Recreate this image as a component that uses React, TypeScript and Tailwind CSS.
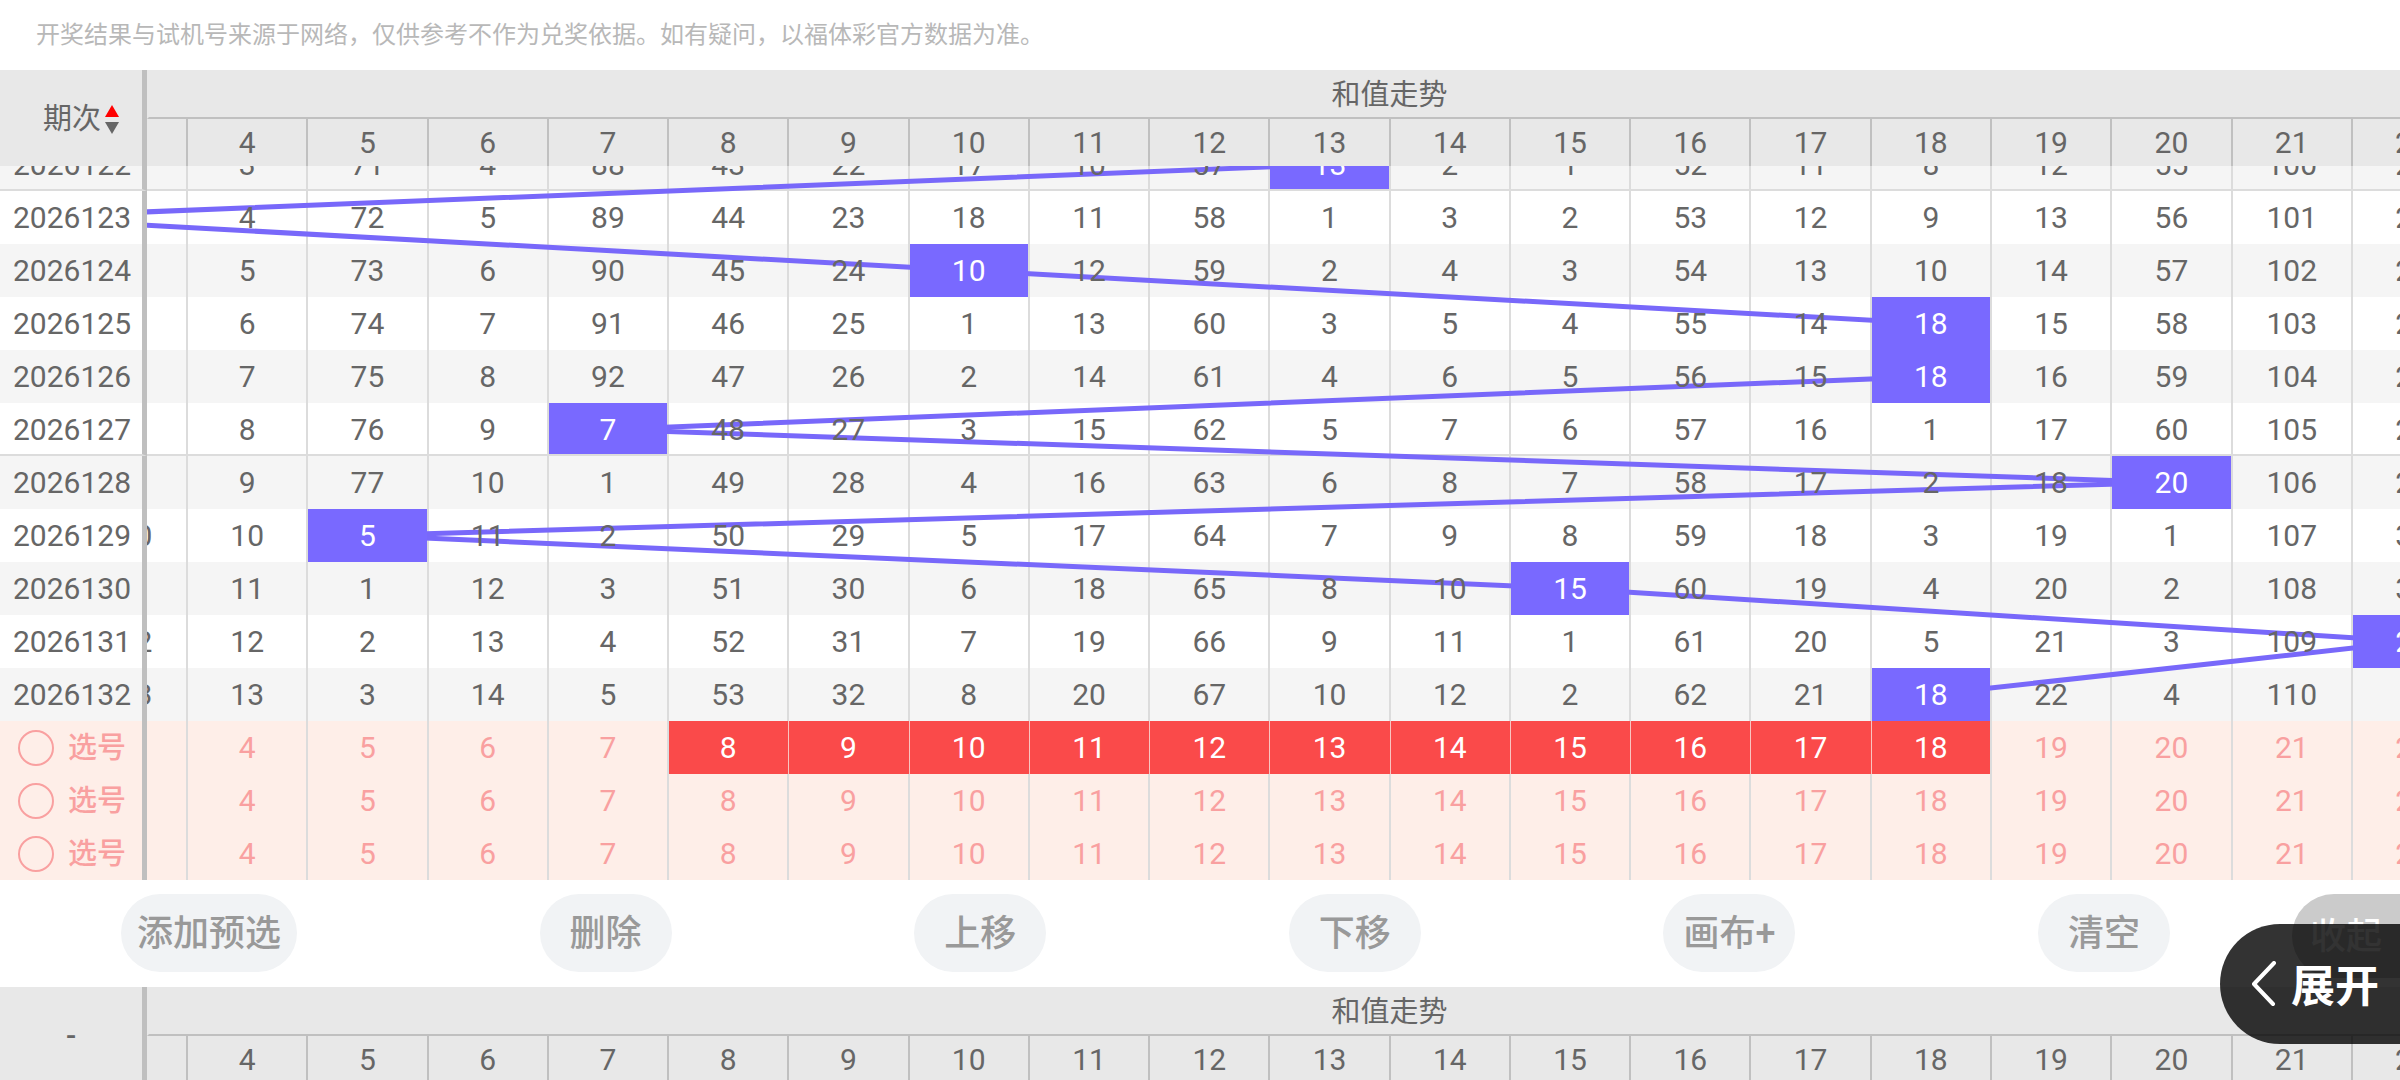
import type { ReactNode } from "react";

const columns = [4, 5, 6, 7, 8, 9, 10, 11, 12, 13, 14, 15, 16, 17, 18, 19, 20, 21];
const ROW_HEIGHT = 53;
const COLUMN_WIDTH = 2165 / 18;

type Draw = { issue: string; before?: number; values: number[]; after?: number; hit: number; groupEnd?: boolean };

const draws: Draw[] = [
  { issue: "2026122", values: [3, 71, 4, 88, 43, 22, 17, 10, 57, 13, 2, 1, 52, 11, 8, 12, 55, 100], after: 23, hit: 13, groupEnd: true },
  { issue: "2026123", values: [4, 72, 5, 89, 44, 23, 18, 11, 58, 1, 3, 2, 53, 12, 9, 13, 56, 101], after: 24, hit: 2 },
  { issue: "2026124", values: [5, 73, 6, 90, 45, 24, 10, 12, 59, 2, 4, 3, 54, 13, 10, 14, 57, 102], after: 25, hit: 10 },
  { issue: "2026125", values: [6, 74, 7, 91, 46, 25, 1, 13, 60, 3, 5, 4, 55, 14, 18, 15, 58, 103], after: 26, hit: 18 },
  { issue: "2026126", values: [7, 75, 8, 92, 47, 26, 2, 14, 61, 4, 6, 5, 56, 15, 18, 16, 59, 104], after: 27, hit: 18 },
  { issue: "2026127", values: [8, 76, 9, 7, 48, 27, 3, 15, 62, 5, 7, 6, 57, 16, 1, 17, 60, 105], after: 28, hit: 7, groupEnd: true },
  { issue: "2026128", values: [9, 77, 10, 1, 49, 28, 4, 16, 63, 6, 8, 7, 58, 17, 2, 18, 20, 106], after: 29, hit: 20 },
  { issue: "2026129", before: 100, values: [10, 5, 11, 2, 50, 29, 5, 17, 64, 7, 9, 8, 59, 18, 3, 19, 1, 107], after: 30, hit: 5 },
  { issue: "2026130", values: [11, 1, 12, 3, 51, 30, 6, 18, 65, 8, 10, 15, 60, 19, 4, 20, 2, 108], after: 31, hit: 15 },
  { issue: "2026131", before: 102, values: [12, 2, 13, 4, 52, 31, 7, 19, 66, 9, 11, 1, 61, 20, 5, 21, 3, 109], after: 22, hit: 22 },
  { issue: "2026132", before: 103, values: [13, 3, 14, 5, 53, 32, 8, 20, 67, 10, 12, 2, 62, 21, 18, 22, 4, 110], hit: 18 },
];

const picks = [
  { id: "pick-1", from: 8, to: 18 },
  { id: "pick-2", from: 0, to: 0 },
  { id: "pick-3", from: 0, to: 0 },
];

const actions = ["添加预选", "删除", "上移", "下移", "画布+", "清空"];

function Columns() {
  return (
    <colgroup>
      <col className="w-[147px]" />
      <col className="w-[41px]" />
      {columns.map((n) => (
        <col key={n} />
      ))}
      <col className="w-[47px]" />
    </colgroup>
  );
}

function SortArrows() {
  return (
    <svg className="h-[34px] w-[14px]" viewBox="0 0 14 34" aria-hidden="true">
      <path d="M7 2 14 14H0Z" fill="#ff0000" />
      <path d="M0 19H14L7 31Z" fill="#666666" />
    </svg>
  );
}

function Header({ sortable }: { sortable?: boolean }) {
  return (
    <table className="w-full table-fixed border-separate border-spacing-0 bg-[#e8e8e8]">
      <Columns />
      <thead>
        <tr className="h-[49px]">
          <th rowSpan={2} className="border-r-[5px] border-[#bfbfbf] p-0 font-normal">
            {sortable ? (
              <button type="button" className="flex w-full items-center justify-center gap-1 pt-1 pl-6 pr-1">
                <span className="text-[29px]">期次</span>
                <SortArrows />
              </button>
            ) : (
              <span className="text-[30px] font-medium">-</span>
            )}
          </th>
          <th
            colSpan={20}
            className="border-b-2 border-l-2 border-b-[#c0c0c0] border-l-[#e8e8e8] p-0 pt-1 pl-[230px] text-[29px] leading-none font-normal"
          >
            和值走势
          </th>
        </tr>
        <tr className="h-[47px]">
          <th className="border-r-2 border-[#c0c0c0] p-0" />
          {columns.map((n) => (
            <th key={n} className="border-r-2 border-[#c0c0c0] p-0 text-[30px] leading-none font-normal">
              {n}
            </th>
          ))}
          <th className="p-0 text-[30px] leading-none font-normal">
            <EdgeValue side="right">22</EdgeValue>
          </th>
        </tr>
      </thead>
    </table>
  );
}

function EdgeValue({ side, children }: { side: "left" | "right"; children: ReactNode }) {
  return (
    <div className={side === "left" ? "flex justify-end overflow-hidden" : "flex justify-start overflow-hidden"}>
      <span className="relative z-20 w-[118px] shrink-0 text-center">{children}</span>
    </div>
  );
}

function TrendLines() {
  const points = draws.map((d, i) => ({
    x: 40 + (d.hit - 4 + 0.5) * COLUMN_WIDTH,
    y: (i + 0.5) * ROW_HEIGHT,
  }));
  return (
    <svg
      className="pointer-events-none absolute inset-y-0 right-0 z-10 h-full w-[calc(100%-147px)]"
      viewBox={`0 0 2253 ${14 * ROW_HEIGHT}`}
      preserveAspectRatio="none"
      aria-hidden="true"
    >
      <polyline
        points={points.map((p) => `${p.x},${p.y}`).join(" ")}
        fill="none"
        stroke="#7868fa"
        strokeWidth="5"
        vectorEffect="non-scaling-stroke"
      />
    </svg>
  );
}

function DrawRow({ draw, index }: { draw: Draw; index: number }) {
  const line = draw.groupEnd ? "border-b-2 pt-[2px]" : "pt-0";
  return (
    <tr className={`h-[53px] ${index % 2 === 0 ? "bg-[#f5f5f5]" : "bg-white"}`}>
      <th scope="row" className={`border-r-[5px] border-r-[#bfbfbf] border-b-[#dcdcdc] pr-0 pb-0 pl-[2px] font-normal ${line}`}>
        {draw.issue}
      </th>
      <td className={`border-r-2 border-[#dcdcdc] px-0 pb-0 ${line}`}>
        {draw.before && <EdgeValue side="left">{draw.before}</EdgeValue>}
      </td>
      {columns.map((n, i) => (
        <td key={n} className={`relative border-r-2 border-[#dcdcdc] px-0 pb-0 text-center ${line}`}>
          {n === draw.hit ? (
            <span className={`absolute inset-0 z-20 grid place-items-center bg-[#7969ff] text-white ${draw.groupEnd ? "pt-[2px]" : ""}`}>
              {draw.values[i]}
            </span>
          ) : (
            <span className="relative z-20">{draw.values[i]}</span>
          )}
        </td>
      ))}
      <td
        className={`border-[#dcdcdc] px-0 pb-0 ${line} ${draw.hit === 22 ? "relative z-20 bg-[#7969ff] text-white" : ""}`}
      >
        {draw.after && <EdgeValue side="right">{draw.after}</EdgeValue>}
      </td>
    </tr>
  );
}

function PickRow({ id, from, to }: { id: string; from: number; to: number }) {
  return (
    <tr className="h-[53px] bg-[#feeee8] text-[#f9a0a0]">
      <th scope="row" className="border-r-[5px] border-[#bfbfbf] p-0 font-normal">
        <div className="flex items-center gap-[14px] pl-[18px]">
          <input
            id={id}
            name="pick"
            type="radio"
            className="size-9 appearance-none rounded-full border-2 border-[#f9a0a0] checked:bg-[#f9a0a0]"
          />
          <label htmlFor={id} className="text-[29px] font-medium">
            选号
          </label>
        </div>
      </th>
      <td className="border-r-2 border-[#dcdcdc] p-0" />
      {columns.map((n) => {
        const chosen = n >= from && n <= to;
        const edge = chosen && n < to ? "border-r border-[#f9c4c0] pr-px" : "border-r-2 border-[#dcdcdc] pr-0";
        return (
          <td key={n} className={`py-0 pl-0 ${edge} ${chosen ? "bg-[#fa4a4a] bg-clip-padding text-white" : ""}`}>
            <button type="button" className="block w-full text-center">
              {n}
            </button>
          </td>
        );
      })}
      <td className="p-0">
        <EdgeValue side="right">22</EdgeValue>
      </td>
    </tr>
  );
}

export default function App() {
  return (
    <main className="relative h-screen overflow-hidden bg-white font-[Roboto,'Noto_Sans_CJK_SC',sans-serif] text-[#666666]">
      <p className="flex h-[70px] items-center px-9 text-2xl text-[#b8b8b8]">
        开奖结果与试机号来源于网络，仅供参考不作为兑奖依据。如有疑问，以福体彩官方数据为准。
      </p>

      <Header sortable />

      <section className="overflow-hidden">
        <div className="relative -mt-7">
          <table className="w-full table-fixed border-separate border-spacing-0 text-[30px] leading-9">
            <Columns />
            <tbody>
              {draws.map((d, i) => (
                <DrawRow key={d.issue} draw={d} index={i} />
              ))}
              {picks.map((p) => (
                <PickRow key={p.id} id={p.id} from={p.from} to={p.to} />
              ))}
            </tbody>
          </table>
          <TrendLines />
        </div>
      </section>

      <nav className="relative flex h-[107px] items-start justify-between pt-[14px] pr-[230px] pl-[121px] text-4xl">
        {actions.map((label) => (
          <button
            key={label}
            type="button"
            className="h-[78px] min-w-[132px] rounded-full bg-[#f1f3f5] px-4 pt-[2px] font-medium text-[#999999]"
          >
            {label}
          </button>
        ))}
        <button
          type="button"
          className="absolute top-[14px] right-0 h-[84px] w-[108px] rounded-l-full bg-[#cbcbcb] pt-[2px] font-medium text-white"
        >
          收起
        </button>
      </nav>

      <Header />

      <button
        type="button"
        className="absolute right-0 bottom-9 z-30 flex h-[120px] w-[180px] items-center gap-[14px] rounded-l-full bg-black/80 pl-[31px] text-[44px] font-bold text-white"
      >
        <svg className="h-[46px] w-[26px] shrink-0" viewBox="0 0 26 46" fill="none" aria-hidden="true">
          <path d="M23 2 3 23 22 43" stroke="currentColor" strokeWidth="4" strokeLinecap="round" strokeLinejoin="round" />
        </svg>
        <span className="pt-[6px]">展开</span>
      </button>
    </main>
  );
}
